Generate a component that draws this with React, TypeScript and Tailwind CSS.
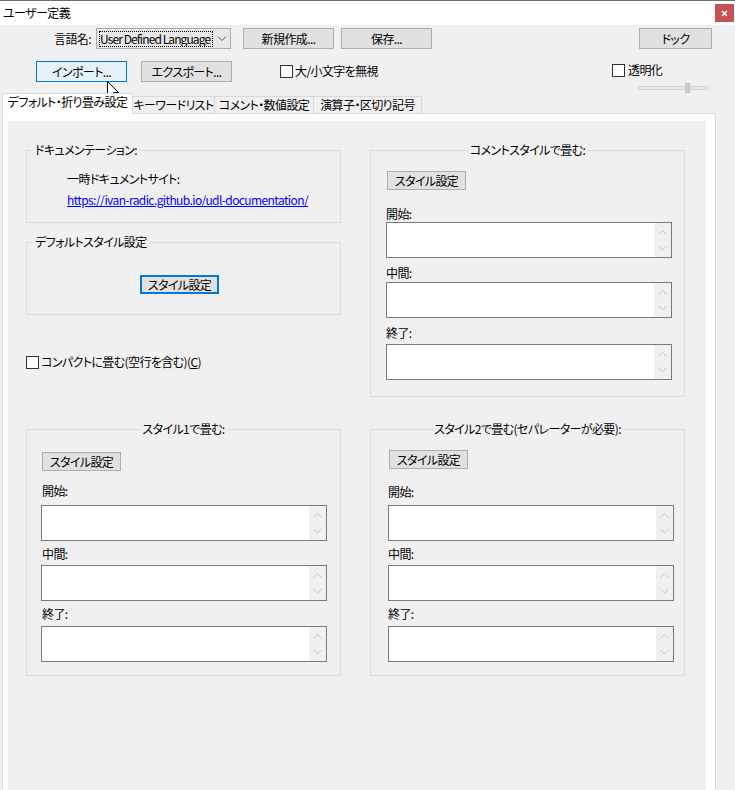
import React from "react";

const jp = "font-['Noto_Sans_CJK_JP',sans-serif] [font-feature-settings:'palt'] tracking-[-0.6px]";

type Tone = "normal" | "hover" | "focus";

function Btn({
  children,
  tone = "normal",
  className = "",
}: {
  children: React.ReactNode;
  tone?: Tone;
  className?: string;
}) {
  const look =
    tone === "hover"
      ? "border border-[#0078d7] bg-[#e5f1fb]"
      : tone === "focus"
      ? "border-2 border-[#0078d7] bg-[#e1e1e1]"
      : "border border-[#adadad] bg-[#e1e1e1]";
  return (
    <button className={`flex shrink-0 items-center justify-center whitespace-nowrap text-[12px] leading-[14px] text-black ${look} ${className}`}>
      {children}
    </button>
  );
}

function Check({ children, className = "" }: { children: React.ReactNode; className?: string }) {
  return (
    <div className={`flex items-center ${className}`}>
      <span className="h-[13px] w-[13px] shrink-0 border border-[#333333] bg-white" />
      <span className="ml-[2px] whitespace-nowrap text-[12px] leading-[14px]">{children}</span>
    </div>
  );
}

function TextBox({ className = "" }: { className?: string }) {
  return (
    <div className={`flex h-[36px] w-[286px] justify-end border border-[#7a7a7a] bg-white ${className}`}>
      <div className="h-full w-[17px] bg-[#f0f0f0]">
        <svg width="17" height="34" viewBox="0 0 17 34" fill="none" stroke="#c4c4c4" strokeWidth="1">
          <path d="M4.5 11.5 L8.5 7.5 L12.5 11.5" />
          <path d="M4.5 23 L8.5 27 L12.5 23" />
        </svg>
      </div>
    </div>
  );
}

function GroupBox({
  label,
  center = false,
  className = "",
  children,
}: {
  label: string;
  center?: boolean;
  className?: string;
  children?: React.ReactNode;
}) {
  return (
    <div className={`relative w-[315px] border border-[#dcdcdc] ${className}`}>
      <span
        className={`absolute top-[-8px] whitespace-nowrap bg-[#f0f0f0] px-[2px] text-[12px] leading-[14px] ${
          center ? "left-1/2 -translate-x-1/2" : "left-[6px]"
        }`}
      >
        {label}
      </span>
      {children}
    </div>
  );
}

const layouts = {
  top: {
    btn: "mt-[20px] ml-[16px]",
    l1: "mt-[17px]",
    t1: "mt-[1px]",
    l2: "mt-[8px]",
    t2: "mt-[2px]",
    l3: "mt-[8px]",
    t3: "mt-[4px]",
    lx: "ml-[15px]",
    tx: "ml-[15px]",
  },
  left: {
    btn: "mt-[22px] ml-[15px]",
    l1: "mt-[13px]",
    t1: "mt-[7px]",
    l2: "mt-[6px]",
    t2: "mt-[4px]",
    l3: "mt-[6px]",
    t3: "mt-[5px]",
    lx: "ml-[15px]",
    tx: "ml-[14px]",
  },
  right: {
    btn: "mt-[20px] ml-[18px]",
    l1: "mt-[16px]",
    t1: "mt-[6px]",
    l2: "mt-[6px]",
    t2: "mt-[4px]",
    l3: "mt-[6px]",
    t3: "mt-[5px]",
    lx: "ml-[17px]",
    tx: "ml-[17px]",
  },
};

function StyleBox({ label, layout }: { label: string; layout: keyof typeof layouts }) {
  const s = layouts[layout];
  return (
    <GroupBox label={label} center className="h-[247px]">
      <div className="flex flex-col items-start">
        <Btn className={`h-[19px] w-[79px] ${s.btn}`}>スタイル設定</Btn>
        <span className={`text-[12px] leading-[14px] ${s.l1} ${s.lx}`}>開始:</span>
        <TextBox className={`${s.t1} ${s.tx}`} />
        <span className={`text-[12px] leading-[14px] ${s.l2} ${s.lx}`}>中間:</span>
        <TextBox className={`${s.t2} ${s.tx}`} />
        <span className={`text-[12px] leading-[14px] ${s.l3} ${s.lx}`}>終了:</span>
        <TextBox className={`${s.t3} ${s.tx}`} />
      </div>
    </GroupBox>
  );
}

export default function App() {
  return (
    <div className={`relative flex h-[790px] w-[735px] flex-col overflow-hidden bg-[#f0f0f0] text-black ${jp}`}>
      {/* title bar */}
      <div className="flex h-[25px] shrink-0 justify-between border-t border-[#6e6e6e] bg-white">
        <span className="ml-[3px] self-center text-[12px] leading-[14px]">ユーザー定義</span>
        <div className="mr-[1px] mt-[3px] flex h-[18px] w-[19px] items-center justify-center bg-[#c75050]">
          <svg width="7" height="7" viewBox="0 0 7 7" stroke="white" strokeWidth="1.6">
            <path d="M1 1 L6 6 M6 1 L1 6" />
          </svg>
        </div>
      </div>

      {/* language row */}
      <div className="mt-[3px] flex h-[21px] shrink-0 items-center">
        <span className="w-[91px] text-right text-[12px] leading-[14px]">言語名:</span>
        <div className="ml-[5px] flex h-[21px] w-[135px] items-center border border-[#acacac] bg-[#e8e8e8]">
          <div className="ml-[2px] flex h-[16px] w-[114px] items-center overflow-hidden whitespace-nowrap border border-dotted border-black text-[12px] leading-[14px] tracking-[-0.9px]">
            User Defined Language
          </div>
          <svg className="ml-[4px]" width="10" height="6" viewBox="0 0 10 6" fill="none" stroke="#555555" strokeWidth="1">
            <path d="M1 0.5 L5 4.5 L9 0.5" />
          </svg>
        </div>
        <Btn className="ml-[12px] h-[21px] w-[91px]">新規作成...</Btn>
        <Btn className="ml-[7px] h-[21px] w-[91px]">保存...</Btn>
        <Btn className="ml-auto mr-[23px] h-[21px] w-[73px]">ドック</Btn>
      </div>

      {/* import / export row */}
      <div className="mt-[12px] flex h-[32px] shrink-0 items-start">
        <Btn tone="hover" className="ml-[36px] h-[21px] w-[91px]">
          インポート...
        </Btn>
        <Btn className="ml-[14px] h-[21px] w-[91px]">エクスポート...</Btn>
        <Check className="ml-[48px] mt-[3px]">大/小文字を無視</Check>
        <div className="ml-auto mr-[27px] mt-[2px] flex flex-col items-start">
          <Check>
            <span className="ml-[1px]">透明化</span>
          </Check>
          <div className="relative ml-[26px] mt-[9px] h-[4px] w-[70px] border border-[#d4d4d4] bg-[#e6e6e6]">
            <span className="absolute left-[46px] top-[-4px] h-[10px] w-[5px] bg-[#c8c8c8]" />
          </div>
        </div>
      </div>

      {/* tabs */}
      <div className="relative z-10 flex h-[20px] shrink-0 items-start whitespace-nowrap pl-[2px] text-[12px] leading-[14px]">
        <div className="flex h-[21px] w-[131px] justify-center border-x border-t border-[#d9d9d9] bg-white pt-[1px]">
          デフォルト・折り畳み設定
        </div>
        <div className="mt-[3px] flex h-[17px] w-[82px] items-center justify-center border-r border-t border-[#d9d9d9]">
          キーワードリスト
        </div>
        <div className="mt-[3px] flex h-[17px] w-[99px] items-center justify-center border-r border-t border-[#d9d9d9]">
          コメント・数値設定
        </div>
        <div className="mt-[3px] flex h-[17px] w-[108px] items-center justify-center border-r border-t border-[#d9d9d9]">
          演算子・区切り記号
        </div>
      </div>

      {/* tab panel */}
      <div className="ml-[2px] h-[700px] w-[714px] shrink-0 border border-[#d9d9d9] bg-white pl-[5px] pr-[9px] pt-[7px]">
        <div className="grid h-full grid-cols-[315px_315px] content-start gap-x-[29px] gap-y-[32px] bg-[#f0f0f0] pl-[18px] pt-[29px] text-[12px] leading-[14px]">
          <div className="flex flex-col items-start">
            <GroupBox label="ドキュメンテーション:" className="h-[73px]">
              <div className="flex flex-col items-start pl-[40px] pt-[21px]">
                <span>一時ドキュメントサイト:</span>
                <a className="mt-[7px] whitespace-nowrap text-[#0000ff] underline">
                  https://ivan-radic.github.io/udl-documentation/
                </a>
              </div>
            </GroupBox>
            <GroupBox label="デフォルトスタイル設定" className="mt-[19px] h-[73px]">
              <Btn tone="focus" className="ml-[113px] mt-[32px] h-[19px] w-[79px]">
                スタイル設定
              </Btn>
            </GroupBox>
            <Check className="mt-[40px]">
              コンパクトに畳む(空行を含む)(<span className="underline">C</span>)
            </Check>
          </div>
          <StyleBox label="コメントスタイルで畳む:" layout="top" />
          <StyleBox label="スタイル1で畳む:" layout="left" />
          <StyleBox label="スタイル2で畳む(セパレーターが必要):" layout="right" />
        </div>
      </div>

      {/* mouse pointer over the import button */}
      <svg className="absolute left-[107px] top-[81px]" width="13" height="20" viewBox="0 0 13 20">
        <path
          d="M0.5 0.5 L0.5 16 L4.2 12.4 L6.9 18.6 L9.1 17.6 L6.5 11.6 L11.5 11.6 Z"
          fill="white"
          stroke="black"
          strokeWidth="1"
          strokeLinejoin="round"
        />
      </svg>
    </div>
  );
}
